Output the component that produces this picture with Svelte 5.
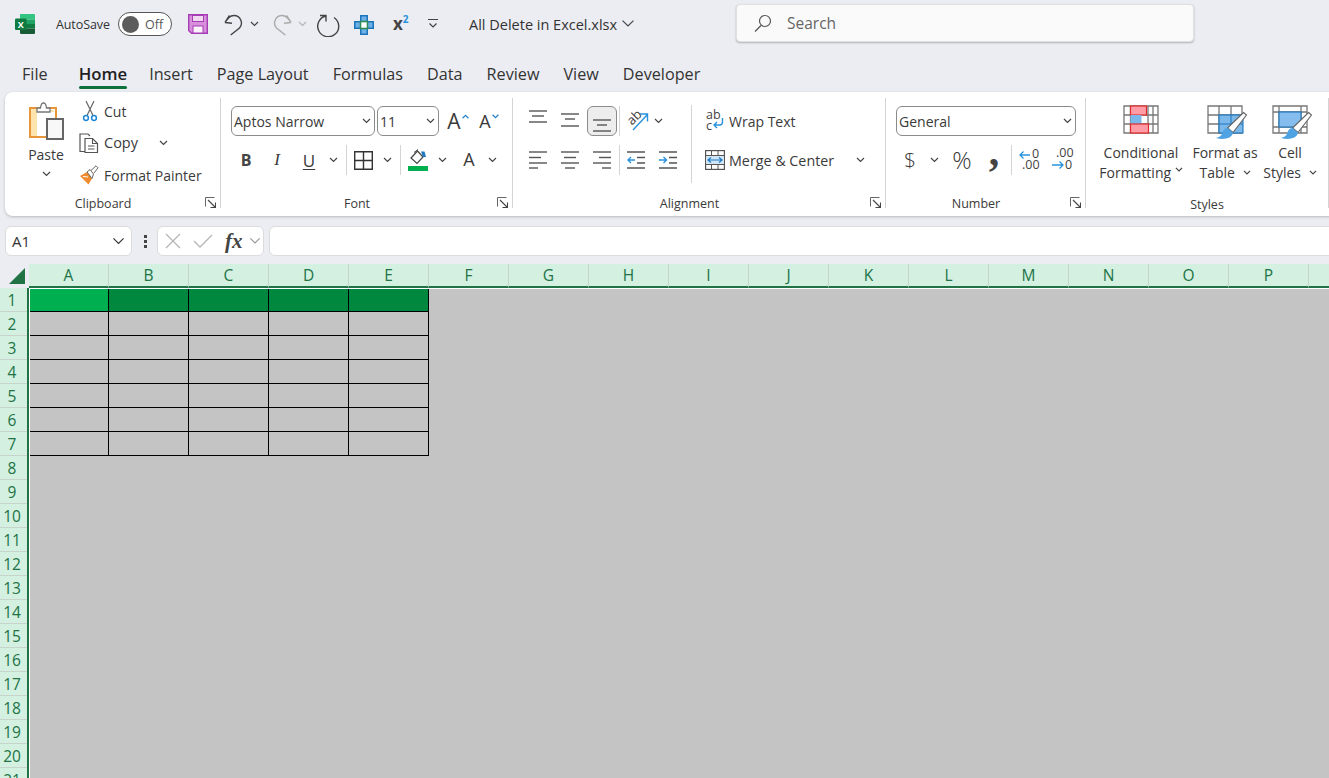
<script>
  const tabs = ['File', 'Home', 'Insert', 'Page Layout', 'Formulas', 'Data', 'Review', 'View', 'Developer'];
  const columns = 'ABCDEFGHIJKLMNOPQ'.split('');
  const rows = Array.from({ length: 21 }, (_, i) => i + 1);
  const tableCols = [0, 1, 2, 3, 4];
  const tableRows = [1, 2, 3, 4, 5, 6, 7];
</script>

{#snippet chev(w = 9, color = '#444')}
  <svg class="chev" width={w} height={(w * 2) / 3} viewBox="0 0 9 6"><path d="M1 1l3.500 3.500L8 1" fill="none" stroke={color} stroke-width="1.200" vector-effect="non-scaling-stroke" /></svg>
{/snippet}

{#snippet launcher()}
  <svg class="launcher" width="11" height="11" viewBox="0 0 11 11"><path d="M.5 9.500V.5h9" fill="none" stroke="#666" /><path d="M3 3l7 7M10.500 5.500v5h-5" fill="none" stroke="#444" stroke-width="1.100" /></svg>
{/snippet}

{#snippet lines(spec)}
  <svg width="20" height="24" viewBox="-1 0 20 24">
    {#each spec as l}
      <path d="M{l[0]} {l[2]}H{l[1]}" stroke="#555" stroke-width="1.400" />
    {/each}
  </svg>
{/snippet}

{#snippet brush()}
  <path d="M36.500 7.500L39.500 10 26 27.500 20.500 23z" fill="#fff" stroke="#666" stroke-width="1.200" />
  <path d="M20.500 23c-3.500 0-4.500 3-5.500 6-1 2-3 3-6 4 7 2 16 1 17-5.500z" fill="#4fa3e3" />
{/snippet}

<div class="app">
  <header class="titlebar">
    <svg class="logo" width="20" height="20" viewBox="0 0 20 20">
      <path d="M5 0h14a1 1 0 0 1 1 1v4.500H5z" fill="#33c481" />
      <path d="M5 5.500h15V10H5z" fill="#21a366" />
      <path d="M5 10h15v4.500H5z" fill="#107c41" />
      <path d="M5 14.500h15V19a1 1 0 0 1-1 1H6a1 1 0 0 1-1-1z" fill="#185c37" />
      <rect y="4.500" width="11.500" height="11.500" rx="1" fill="#0f7b40" />
      <text x="5.700" y="13.500" class="logo-x" text-anchor="middle">X</text>
    </svg>
    <span class="autosave">AutoSave</span>
    <span class="toggle"><i></i>Off</span>
    <svg class="save" width="20" height="20" viewBox="0 0 20 20">
      <path d="M.7.7h18.600v18.600H3.500L.7 16.500z" fill="#d88fdc" stroke="#a63db5" stroke-width="1.400" />
      <rect x="4.500" y="1.500" width="11" height="6" fill="#f0d8f1" stroke="#a63db5" />
      <rect x="5" y="12" width="10" height="7" fill="#fbf2fb" stroke="#a63db5" />
    </svg>
    <svg class="undo" width="24" height="24" viewBox="0 0 24 24"><path d="M4 9.500L8.500 2.500M4 9.500l7 .8M4.500 8.500L8 4.500Q10 2.500 13 2.500A7.500 7.500 0 0 1 18.500 15L9.700 22" fill="none" stroke="#444" stroke-width="1.400" /></svg>
    <span class="undo-chev">{@render chev()}</span>
    <svg class="redo" width="24" height="24" viewBox="0 0 24 24"><path d="M20 9.500L15.500 2.500M20 9.500l-7 .8M19.500 8.500L16 4.500Q14 2.500 11 2.500A7.500 7.500 0 0 0 5.500 15L14.300 22" fill="none" stroke="#aaa" stroke-width="1.400" /></svg>
    <span class="redo-chev">{@render chev(9, '#b5b5b5')}</span>
    <svg class="refresh" width="24" height="24" viewBox="0 0 24 24"><path d="M17 4.500A10.500 10.500 0 1 1 9 3M3 2.500h6V8.500" fill="none" stroke="#444" stroke-width="1.400" /></svg>
    <svg class="cross" width="20" height="20" viewBox="0 0 20 20">
      <path d="M6 0h8v6h6v8h-6v6H6v-6H0V6h6z" fill="#1c75bc" />
      <path d="M7.500 1.500h5V6h-5zM1.500 7.500H6v5H1.500zM14 7.500h4.500v5H14zM7.500 14h5v4.500h-5z" fill="#6db1e6" />
      <rect x="6.500" y="6.500" width="7" height="7" fill="#fff" stroke="#2e8b57" stroke-width="1.600" />
    </svg>
    <span class="super">x<sup>2</sup></span>
    <svg class="qat" width="12" height="12" viewBox="0 0 12 12"><path d="M1 1.500h10M2.500 5.500L6 9l3.500-3.500" fill="none" stroke="#444" stroke-width="1.200" /></svg>
    <span class="docname">All Delete in Excel.xlsx</span>
    {@render chev(14)}
    <div class="search">
      <svg width="18" height="18" viewBox="0 0 18 18"><circle cx="11" cy="7" r="5.500" fill="none" stroke="#555" stroke-width="1.200" /><path d="M7 11.500L1 17.500" stroke="#555" stroke-width="1.200" /></svg>
      <span>Search</span>
    </div>
  </header>

  <nav class="tabs">
    {#each tabs as t}
      <span class="tab" class:active={t === 'Home'}>{t}</span>
    {/each}
  </nav>

  <section class="ribbon">
    <div class="group clipboard">
      <div class="body clip-body">
        <div class="paste">
          <svg width="36" height="38" viewBox="0 0 36 38">
            <rect x="2" y="6" width="26" height="29" fill="#fff" stroke="#e8963a" stroke-width="2" />
            <rect x="3" y="7" width="6" height="27" fill="#fde3ad" />
            <rect x="9" y="8" width="17" height="2" fill="#fde3ad" />
            <path d="M9 10V6h3.500Q13 1 15.500 1T18.500 6H22v4z" fill="#fff" stroke="#777" stroke-width="1.300" />
            <rect x="19" y="17" width="16" height="20" fill="#f8f8f8" stroke="#666" stroke-width="2" />
          </svg>
          <span>Paste</span>
          {@render chev()}
        </div>
        <div class="clip-tools">
          <span class="ic cut-ic">
            <svg width="16" height="22" viewBox="0 0 16 22"><path d="M4 1l7 14.500M12 1L5 15.500" stroke="#666" stroke-width="1.200" fill="none" /><circle cx="4" cy="18" r="2.400" fill="none" stroke="#1e88d8" stroke-width="1.500" /><circle cx="12" cy="18" r="2.400" fill="none" stroke="#1e88d8" stroke-width="1.500" /></svg>
          </span>
          <span>Cut</span><span></span>
          <span class="ic">
            <svg width="20" height="20" viewBox="0 0 20 20"><path d="M6 18.500H1V1h8l2 2" fill="none" stroke="#555" stroke-width="1.200" /><path d="M6 5.500h7.500l5 5v9H6z" fill="#fff" stroke="#555" stroke-width="1.200" /><path d="M13.500 5.500v5h5M9 13h6.500M9 16h6.500" fill="none" stroke="#555" stroke-width="1.100" /></svg>
          </span>
          <span class="copy">Copy</span><span class="chev-cell">{@render chev()}</span>
          <span class="ic">
            <svg width="20" height="20" viewBox="0 0 20 20"><path d="M1 11l7-4 5 6.500-3.500 6z" fill="#f08c2e" /><path d="M4 11.500l5 .5" stroke="#fff" stroke-width="1" /><path d="M8 7l3-2.500 3.500 4.500-1.500 4.500z" fill="#fff" stroke="#666" /><path d="M12 5.500L17 .8l2 2-4 5.200" fill="#fff" stroke="#666" /></svg>
          </span>
          <span class="painter">Format Painter</span>
        </div>
      </div>
      <div class="label">Clipboard</div>
      {@render launcher()}
    </div>

    <div class="group font">
      <div class="body rows">
        <div class="font-top">
          <div class="combo"><span>Aptos Narrow</span>{@render chev()}</div>
          <div class="combo"><span>11</span>{@render chev()}</div>
          <span class="grow">A<svg width="7" height="5" viewBox="0 0 6 4"><path d="M.5 3.500L3 1l2.500 2.500" fill="none" stroke="#2a82c8" stroke-width="1.100" /></svg></span>
          <span class="shrink">A<svg width="7" height="5" viewBox="0 0 6 4"><path d="M.5.500L3 3 5.500.500" fill="none" stroke="#2a82c8" stroke-width="1.100" /></svg></span>
        </div>
        <div class="font-tools">
          <b class="bold">B</b>
          <i class="ital">I</i>
          <span class="under">U</span>
          {@render chev()}
          <span class="vsep"></span>
          <svg width="19" height="19" viewBox="0 0 19 19"><path d="M.7.700h17.600v17.600H.7zM9.500.700v17.600M.7 9.500h17.600" fill="none" stroke="#333" stroke-width="1.400" /></svg>
          {@render chev()}
          <span class="vsep"></span>
          <svg width="20" height="24" viewBox="0 0 20 24">
            <path d="M9.500 3L3 10l6 5.500 6-6.500z" fill="#fff" stroke="#444" stroke-width="1.200" />
            <path d="M6 4.500l4-3" stroke="#444" />
            <path d="M13 3.500h3.500L18 9h-3z" fill="#1e78c2" />
            <rect y="18" width="20" height="5" fill="#00b050" />
          </svg>
          {@render chev()}
          <span class="color-a">A</span>
          {@render chev()}
        </div>
      </div>
      <div class="label">Font</div>
      {@render launcher()}
    </div>

    <div class="group alignment">
      <div class="body align-body">
        <div class="rows">
          <div class="align-top">
            {@render lines([[0, 18, 2], [3, 15, 7], [0, 18, 13]])}
            {@render lines([[0, 18, 5], [4, 14, 10], [0, 18, 17]])}
            <span class="pressed">{@render lines([[0, 18, 11], [4, 14, 16], [0, 18, 22]])}</span>
            <span class="vsep"></span>
            <svg class="loose" width="24" height="24" viewBox="0 0 24 24">
              <text x="1" y="13" class="orient" transform="rotate(-45 8 9)">ab</text>
              <path d="M7 21L21 6M14 5H21.500V12.500" fill="none" stroke="#2a92dc" stroke-width="1.400" />
            </svg>
            {@render chev()}
          </div>
          <div class="align-bottom">
            {@render lines([[0, 18, 4], [0, 12, 9.5], [0, 18, 15], [0, 9, 20]])}
            {@render lines([[0, 18, 4], [3, 15, 9.5], [0, 18, 15], [4, 14, 20]])}
            {@render lines([[0, 18, 4], [6, 18, 9.5], [0, 18, 15], [9, 18, 20]])}
            <span class="vsep"></span>
            <svg width="20" height="24" viewBox="0 0 20 24">
              <path d="M0 4h18M10 9.500h8M10 15h8M0 20h18" stroke="#555" stroke-width="1.400" />
              <path d="M1 12h7M4 9l-3 3 3 3" fill="none" stroke="#2a92dc" stroke-width="1.400" />
            </svg>
            <svg width="20" height="24" viewBox="0 0 20 24">
              <path d="M0 4h18M10 9.500h8M10 15h8M0 20h18" stroke="#555" stroke-width="1.400" />
              <path d="M0 12h7M4.500 9l3 3-3 3" fill="none" stroke="#2a92dc" stroke-width="1.400" />
            </svg>
          </div>
        </div>
        <span class="tall-sep"></span>
        <div class="rows wrap-col">
          <div class="wrap-row">
            <svg class="loose" width="20" height="24" viewBox="0 0 20 24">
              <text x="1" y="9.500" class="wrap-ab">ab</text>
              <text x="1" y="20.500" class="wrap-ab">c</text>
              <path d="M17.500 9v4q0 3-3 3H9M12 13l-3 3 3 3" fill="none" stroke="#2a92dc" stroke-width="1.400" />
            </svg>
            <span>Wrap Text</span>
          </div>
          <div class="merge-row">
            <svg width="20" height="20" viewBox="0 0 20 20">
              <rect x=".6" y=".6" width="18.800" height="18.800" fill="#fff" stroke="#555" stroke-width="1.200" />
              <path d="M.6 5.500h18.800M.6 14.500h18.800M6.500.6v5M13 .6v5M6.500 14.500v5M13 14.500v5" stroke="#555" stroke-width="1" />
              <rect x="1.200" y="6" width="17.600" height="8" fill="#cfe6f8" />
              <path d="M3 10h14M6 7.500L3 10l3 2.500M14 7.500l3 2.500-3 2.500" fill="none" stroke="#1e78c2" stroke-width="1.200" />
            </svg>
            <span>Merge &amp; Center</span>
            {@render chev()}
          </div>
        </div>
      </div>
      <div class="label">Alignment</div>
      {@render launcher()}
    </div>

    <div class="group number">
      <div class="body rows">
        <div class="combo"><span>General</span>{@render chev()}</div>
        <div class="number-tools">
          <span class="big">$</span>
          {@render chev()}
          <span class="big pct">%</span>
          <span class="comma">,</span>
          <span class="vsep"></span>
          <svg class="loose" width="22" height="24" viewBox="0 0 22 24">
            <text x="13" y="10" class="dec">0</text>
            <text x="3" y="21" class="dec">.00</text>
            <path d="M1 7h10M4.500 3.500L1 7l3.500 3.500" fill="none" stroke="#2a92dc" stroke-width="1.300" />
          </svg>
          <svg class="loose" width="22" height="24" viewBox="0 0 22 24">
            <text x="5" y="9" class="dec">.00</text>
            <text x="14" y="21" class="dec">0</text>
            <path d="M1 17h11M8.500 13.500L12 17l-3.500 3.500" fill="none" stroke="#2a92dc" stroke-width="1.300" />
          </svg>
        </div>
      </div>
      <div class="label">Number</div>
      {@render launcher()}
    </div>

    <div class="group styles">
      <div class="body styles-body">
        <div class="style-btn cf">
          <svg width="36" height="29" viewBox="0 0 36 29">
            <path d="M1 1h34v27H1zM7.500 1v27M25 1v27M30 1v27M1 10h34M1 19h34" fill="#fff" stroke="#777" stroke-width="1.300" />
            <rect x="7.500" y="1" width="16" height="9" fill="#ff9ca5" stroke="#dd2c2c" stroke-width="1.200" />
            <rect x="7.500" y="10" width="11" height="9" fill="#7cb9ea" />
            <rect x="7.500" y="19" width="18" height="9" fill="#ff9ca5" stroke="#dd2c2c" stroke-width="1.200" />
          </svg>
          <span>Conditional</span>
          <span>Formatting {@render chev(8)}</span>
        </div>
        <div class="style-btn">
          <svg width="40" height="34" viewBox="0 0 40 34">
            <path d="M1 1h34v27H1zM12 1v27M24 1v27M1 10h34M1 19h34" fill="#fff" stroke="#777" stroke-width="1.300" />
            <rect x="12" y="10" width="24" height="18" fill="#7cb9ea" stroke="#1c75bc" stroke-width="1.100" />
            <path d="M12 19h24M24 10v18" stroke="#1c75bc" />
            {@render brush()}
          </svg>
          <span>Format as</span>
          <span>Table {@render chev(8)}</span>
        </div>
        <div class="style-btn">
          <svg width="40" height="34" viewBox="0 0 40 34">
            <path d="M1 1h34v27H1zM7 1v27M29 1v27M1 7h34M1 22h34" fill="#fff" stroke="#777" stroke-width="1.300" />
            <rect x="7" y="7" width="22" height="15" fill="#85bdee" stroke="#1c75bc" stroke-width="1.100" />
            {@render brush()}
          </svg>
          <span>Cell</span>
          <span>Styles {@render chev(8)}</span>
        </div>
      </div>
      <div class="label">Styles</div>
    </div>
  </section>

  <section class="formula">
    <div class="box namebox"><span>A1</span>{@render chev(13, '#333')}</div>
    <span class="dots"><i></i><i></i><i></i></span>
    <div class="box fxbox">
      <svg width="16" height="16" viewBox="0 0 16 16"><path d="M1 1l14 14M15 1L1 15" stroke="#b5b5b5" stroke-width="1.300" /></svg>
      <svg width="20" height="16" viewBox="0 0 20 16"><path d="M1 8l6 6L19 2" fill="none" stroke="#b5b5b5" stroke-width="1.300" /></svg>
      <span class="fx">fx</span>
      {@render chev(12, '#999')}
    </div>
    <div class="box input"></div>
  </section>

  <section class="colhead">
    <div class="corner"><svg width="16" height="16" viewBox="0 0 16 16"><path d="M16 0v16H0z" fill="#217346" /></svg></div>
    {#each columns as c}
      <div class="col">{c}</div>
    {/each}
  </section>

  <section class="grid">
    <div class="rowhead">
      {#each rows as r}
        <div class="rownum">{r}</div>
      {/each}
    </div>
    <div class="sheet">
      <div class="table">
        {#each tableRows as r}
          {#each tableCols as c}
            <div class="cell" class:head={r === 1} class:selected={r === 1 && c === 0}></div>
          {/each}
        {/each}
      </div>
    </div>
  </section>
</div>

<style>
  :global(body) {
    margin: 0;
    background: #ebedf2;
  }
  .app {
    width: 1329px;
    height: 778px;
    overflow: hidden;
    background: #ebedf2;
    color: #333;
    font-family: "Open Sans", "Noto Sans", sans-serif;
    font-size: 14px;
  }
  svg {
    display: block;
    flex: none;
  }
  svg.loose {
    overflow: visible;
  }

  /* title bar */
  .titlebar {
    display: flex;
    align-items: center;
    height: 48px;
    padding-left: 15px;
  }
  .logo-x {
    font: bold 9px "Open Sans", sans-serif;
    fill: #fff;
  }
  .autosave {
    margin-left: 21px;
    width: 62px;
    font-size: 12.5px;
    letter-spacing: -0.1px;
    color: #333;
  }
  .toggle {
    box-sizing: border-box;
    display: flex;
    align-items: center;
    width: 54px;
    height: 24px;
    border: 1px solid #555;
    border-radius: 12px;
    padding-left: 3px;
    font-size: 12.5px;
    color: #555;
    background: #fff;
  }
  .toggle i {
    width: 17px;
    height: 17px;
    margin-right: 6px;
    border-radius: 50%;
    background: #5c5c5c;
  }
  .save {
    margin-left: 16px;
  }
  .undo {
    margin-left: 13px;
    margin-top: 1px;
  }
  .undo-chev {
    margin-left: 5px;
  }
  .redo {
    margin-left: 12px;
    margin-top: 1px;
  }
  .redo-chev {
    margin-left: 3px;
  }
  .refresh {
    margin-left: 10px;
    margin-top: 1px;
  }
  .cross {
    margin-left: 13px;
    margin-top: 2px;
  }
  .super {
    margin-left: 19px;
    width: 16px;
    font-weight: 700;
    font-size: 17px;
    line-height: 18px;
    color: #444;
  }
  .super sup {
    font-size: 10px;
    line-height: 0;
    color: #2a92dc;
  }
  .qat {
    margin-left: 18px;
  }
  .docname {
    margin-left: 30px;
    width: 152px;
    white-space: nowrap;
    font-size: 14.5px;
    color: #333;
  }
  .search {
    box-sizing: border-box;
    display: flex;
    align-items: center;
    gap: 15px;
    width: 458px;
    height: 38px;
    margin-left: 101px;
    margin-top: -2px;
    padding-left: 17px;
    background: #fafafa;
    border: 1px solid #e0e0e0;
    border-radius: 4px;
    box-shadow: 0 1px 2px rgba(0, 0, 0, 0.25);
    font-size: 15.5px;
    color: #666;
  }

  /* tabs */
  .tabs {
    display: flex;
    gap: 24px;
    height: 44px;
    padding-left: 22px;
    box-sizing: border-box;
    padding-top: 12px;
  }
  .tab {
    position: relative;
    height: 29px;
    line-height: 28px;
    font-size: 16.2px;
    color: #333;
    white-space: nowrap;
  }
  .tab:first-child {
    margin-right: 7px;
  }
  .tab.active {
    font-weight: 600;
    font-size: 16.8px;
    margin-right: -2px;
    color: #1f1f1f;
  }
  .tab.active::after {
    content: '';
    position: absolute;
    left: 0;
    right: 0;
    bottom: 0;
    height: 3px;
    border-radius: 2px;
    background: #0e703a;
  }

  /* ribbon */
  .ribbon {
    display: flex;
    box-sizing: border-box;
    width: 1340px;
    height: 124px;
    margin-left: 5px;
    padding-top: 6px;
    background: #fff;
    border-radius: 8px;
    box-shadow: 0 1px 3px rgba(0, 0, 0, 0.22);
    font-size: 14px;
    color: #3a3a3a;
  }
  .group {
    position: relative;
    box-sizing: border-box;
    height: 110px;
    border-right: 1px solid #d4d4d4;
    flex: none;
  }
  .clipboard {
    width: 216px;
  }
  .font {
    width: 292px;
  }
  .alignment {
    width: 373px;
  }
  .number {
    width: 200px;
  }
  .styles {
    width: 243px;
  }
  .body {
    height: 98px;
    box-sizing: border-box;
    padding: 8px 0 0 10px;
  }
  .label {
    padding-right: 19px;
    font-size: 12.5px;
    line-height: 16px;
    text-align: center;
    color: #3a3a3a;
  }
  .styles .label {
    padding-right: 0;
    margin-top: 1px;
  }
  .launcher {
    position: absolute;
    right: 4px;
    bottom: 0;
  }
  .rows {
    display: flex;
    flex-direction: column;
    gap: 9px;
  }
  .rows > div {
    height: 30px;
  }
  .combo {
    box-sizing: border-box;
    display: flex;
    align-items: center;
    justify-content: space-between;
    height: 30px;
    padding: 0 3px 0 2px;
    border: 1px solid #8b8b8b;
    border-radius: 6px;
    background: #fff;
    white-space: nowrap;
  }
  .vsep {
    width: 1px;
    height: 30px;
    background: #d4d4d4;
  }

  /* clipboard */
  .clip-body {
    display: flex;
    padding: 4px 0 0 16px;
  }
  .paste {
    display: flex;
    flex-direction: column;
    align-items: center;
    width: 50px;
    line-height: 20px;
  }
  .paste span {
    margin-top: 5px;
    margin-bottom: 6px;
  }
  .clip-tools {
    display: grid;
    grid-template-columns: 25px 50px 18px;
    grid-auto-rows: 32px;
    align-items: center;
    margin-left: 8px;
    margin-top: -7px;
  }
  .ic {
    display: flex;
  }
  .cut-ic {
    padding-left: 3px;
  }
  .copy {
    font-size: 14.5px;
    margin-top: -1px;
  }
  .chev-cell {
    display: flex;
    justify-content: center;
  }
  .painter {
    grid-column: span 2;
    white-space: nowrap;
  }

  /* font */
  .font-top {
    display: grid;
    grid-template-columns: 144px 62px 30px 32px;
    column-gap: 2px;
    align-items: center;
  }
  .font-top span {
    white-space: nowrap;
  }
  .grow,
  .shrink {
    display: flex;
    justify-content: center;
    align-items: flex-start;
    line-height: 24px;
    gap: 1px;
  }
  .grow {
    font-size: 21px;
    padding-left: 4px;
  }
  .shrink {
    font-size: 18px;
  }
  .grow svg,
  .shrink svg {
    margin-top: 5px;
  }
  .font-tools {
    display: grid;
    grid-template-columns: 30px 32px 32px 16px 10px 25px 22px 4px 32px 16px 38px 8px;
    align-items: center;
    justify-items: center;
  }
  .bold,
  .color-a {
    font-size: 16px;
  }
  .bold {
    font-weight: 700;
    color: #444;
  }
  .ital {
    font-family: "Liberation Serif", serif;
    font-size: 17px;
  }
  .under {
    font-size: 17px;
    text-decoration: underline;
    text-underline-offset: 2px;
  }
  .color-a {
    font-size: 18px;
    margin-top: -3px;
  }

  /* alignment */
  .align-body {
    display: flex;
  }
  .align-top {
    display: grid;
    grid-template-columns: 30px 34px 30px 4px 33px 8px;
    align-items: center;
    justify-items: center;
  }
  .align-bottom {
    display: grid;
    grid-template-columns: 30px 34px 30px 4px 32px 32px;
    align-items: center;
    justify-items: center;
  }
  .pressed {
    box-sizing: border-box;
    display: flex;
    justify-content: center;
    align-items: center;
    width: 30px;
    height: 30px;
    border: 1px solid #8b8b8b;
    border-radius: 6px;
    background: #ededed;
  }
  .orient {
    font-size: 13px;
    fill: #444;
  }
  .tall-sep {
    width: 1px;
    height: 78px;
    margin: -1px 8px 0 6px;
    background: #d4d4d4;
  }
  .wrap-ab {
    font-size: 12.5px;
    fill: #444;
  }
  .wrap-col {
    width: 172px;
  }
  .wrap-row,
  .merge-row {
    display: grid;
    align-items: center;
    justify-items: center;
  }
  .wrap-row {
    grid-template-columns: 29px 1fr;
  }
  .merge-row {
    grid-template-columns: 29px 122px 18px;
  }
  .wrap-row span,
  .merge-row span {
    justify-self: start;
    white-space: nowrap;
  }
  .merge-row span {
    font-size: 14.3px;
  }

  /* number */
  .number .combo {
    width: 180px;
  }
  .number-tools {
    display: grid;
    grid-template-columns: 28px 20px 36px 28px 6px 32px 32px;
    align-items: center;
    justify-items: center;
  }
  .big {
    font-size: 21px;
    font-weight: 300;
    line-height: 30px;
  }
  .pct {
    font-size: 24px;
  }
  .comma {
    font-family: "Liberation Serif", serif;
    font-weight: 700;
    font-size: 42px;
    line-height: 30px;
    margin-top: -18px;
    color: #444;
  }
  .dec {
    font-size: 12.5px;
    fill: #444;
  }

  /* styles */
  .styles-body {
    display: grid;
    grid-template-columns: 92px 76px 54px;
    padding: 7px 0 0 9px;
  }
  .style-btn {
    display: flex;
    flex-direction: column;
    align-items: center;
    line-height: 20px;
    white-space: nowrap;
  }
  .style-btn svg:first-child {
    margin-bottom: 4px;
    margin-left: 4px;
  }
  .style-btn.cf svg:first-child {
    margin-left: 0;
    margin-bottom: 9px;
  }
  .style-btn .chev {
    display: inline-block;
    vertical-align: middle;
    margin-left: -1px;
  }

  /* formula bar */
  .formula {
    display: flex;
    align-items: center;
    height: 30px;
    margin-top: 10px;
    padding-left: 5px;
  }
  .box {
    box-sizing: border-box;
    flex: none;
    display: flex;
    align-items: center;
    height: 30px;
    background: #fff;
    border: 1px solid #dcdcdc;
    border-radius: 6px;
  }
  .namebox {
    justify-content: space-between;
    width: 127px;
    padding: 0 6px;
    font-size: 15px;
    color: #333;
  }
  .dots {
    display: flex;
    flex-direction: column;
    gap: 2px;
    margin: 0 10px 0 12px;
  }
  .dots i {
    width: 3px;
    height: 3px;
    background: #444;
  }
  .fxbox {
    width: 107px;
    padding-left: 7px;
    gap: 12px;
  }
  .fx {
    font-family: "Liberation Serif", serif;
    font-style: italic;
    font-weight: 700;
    font-size: 21px;
    color: #444;
    margin-right: -6px;
  }
  .input {
    width: 1100px;
    margin-left: 5px;
  }

  /* sheet */
  .colhead {
    display: flex;
    height: 24px;
    margin-top: 8px;
  }
  .corner {
    box-sizing: border-box;
    width: 29px;
    flex: none;
    padding: 4px 0 0 9px;
  }
  .col {
    box-sizing: border-box;
    flex: none;
    width: 80px;
    height: 24px;
    border-right: 1px solid #c6d4cb;
    border-bottom: 2px solid #217346;
    background: #d3f0e0;
    color: #217346;
    font-size: 15.5px;
    line-height: 22px;
    text-align: center;
  }
  .grid {
    display: flex;
    height: 490px;
    overflow: hidden;
  }
  .rowhead {
    box-sizing: border-box;
    flex: none;
    width: 29px;
    border-right: 2px solid #217346;
    background: #d3f0e0;
  }
  .rownum {
    box-sizing: border-box;
    height: 24px;
    padding-right: 3px;
    border-bottom: 1px solid #c6d4cb;
    color: #217346;
    font-size: 15.5px;
    line-height: 24px;
    text-align: center;
  }
  .sheet {
    box-sizing: border-box;
    flex: 1;
    height: 490px;
    border-top: 1px solid #fff;
    border-left: 1px solid #fff;
    background: #c4c4c4;
  }
  .table {
    display: grid;
    grid-template-columns: 79px repeat(4, 80px);
    grid-template-rows: 23px repeat(6, 24px);
    width: 399px;
  }
  .cell {
    box-sizing: border-box;
    border-right: 1px solid #000;
    border-bottom: 1px solid #000;
  }
  .cell.head {
    background: #00883f;
  }
  .cell.selected {
    background: #00b050;
  }
</style>
